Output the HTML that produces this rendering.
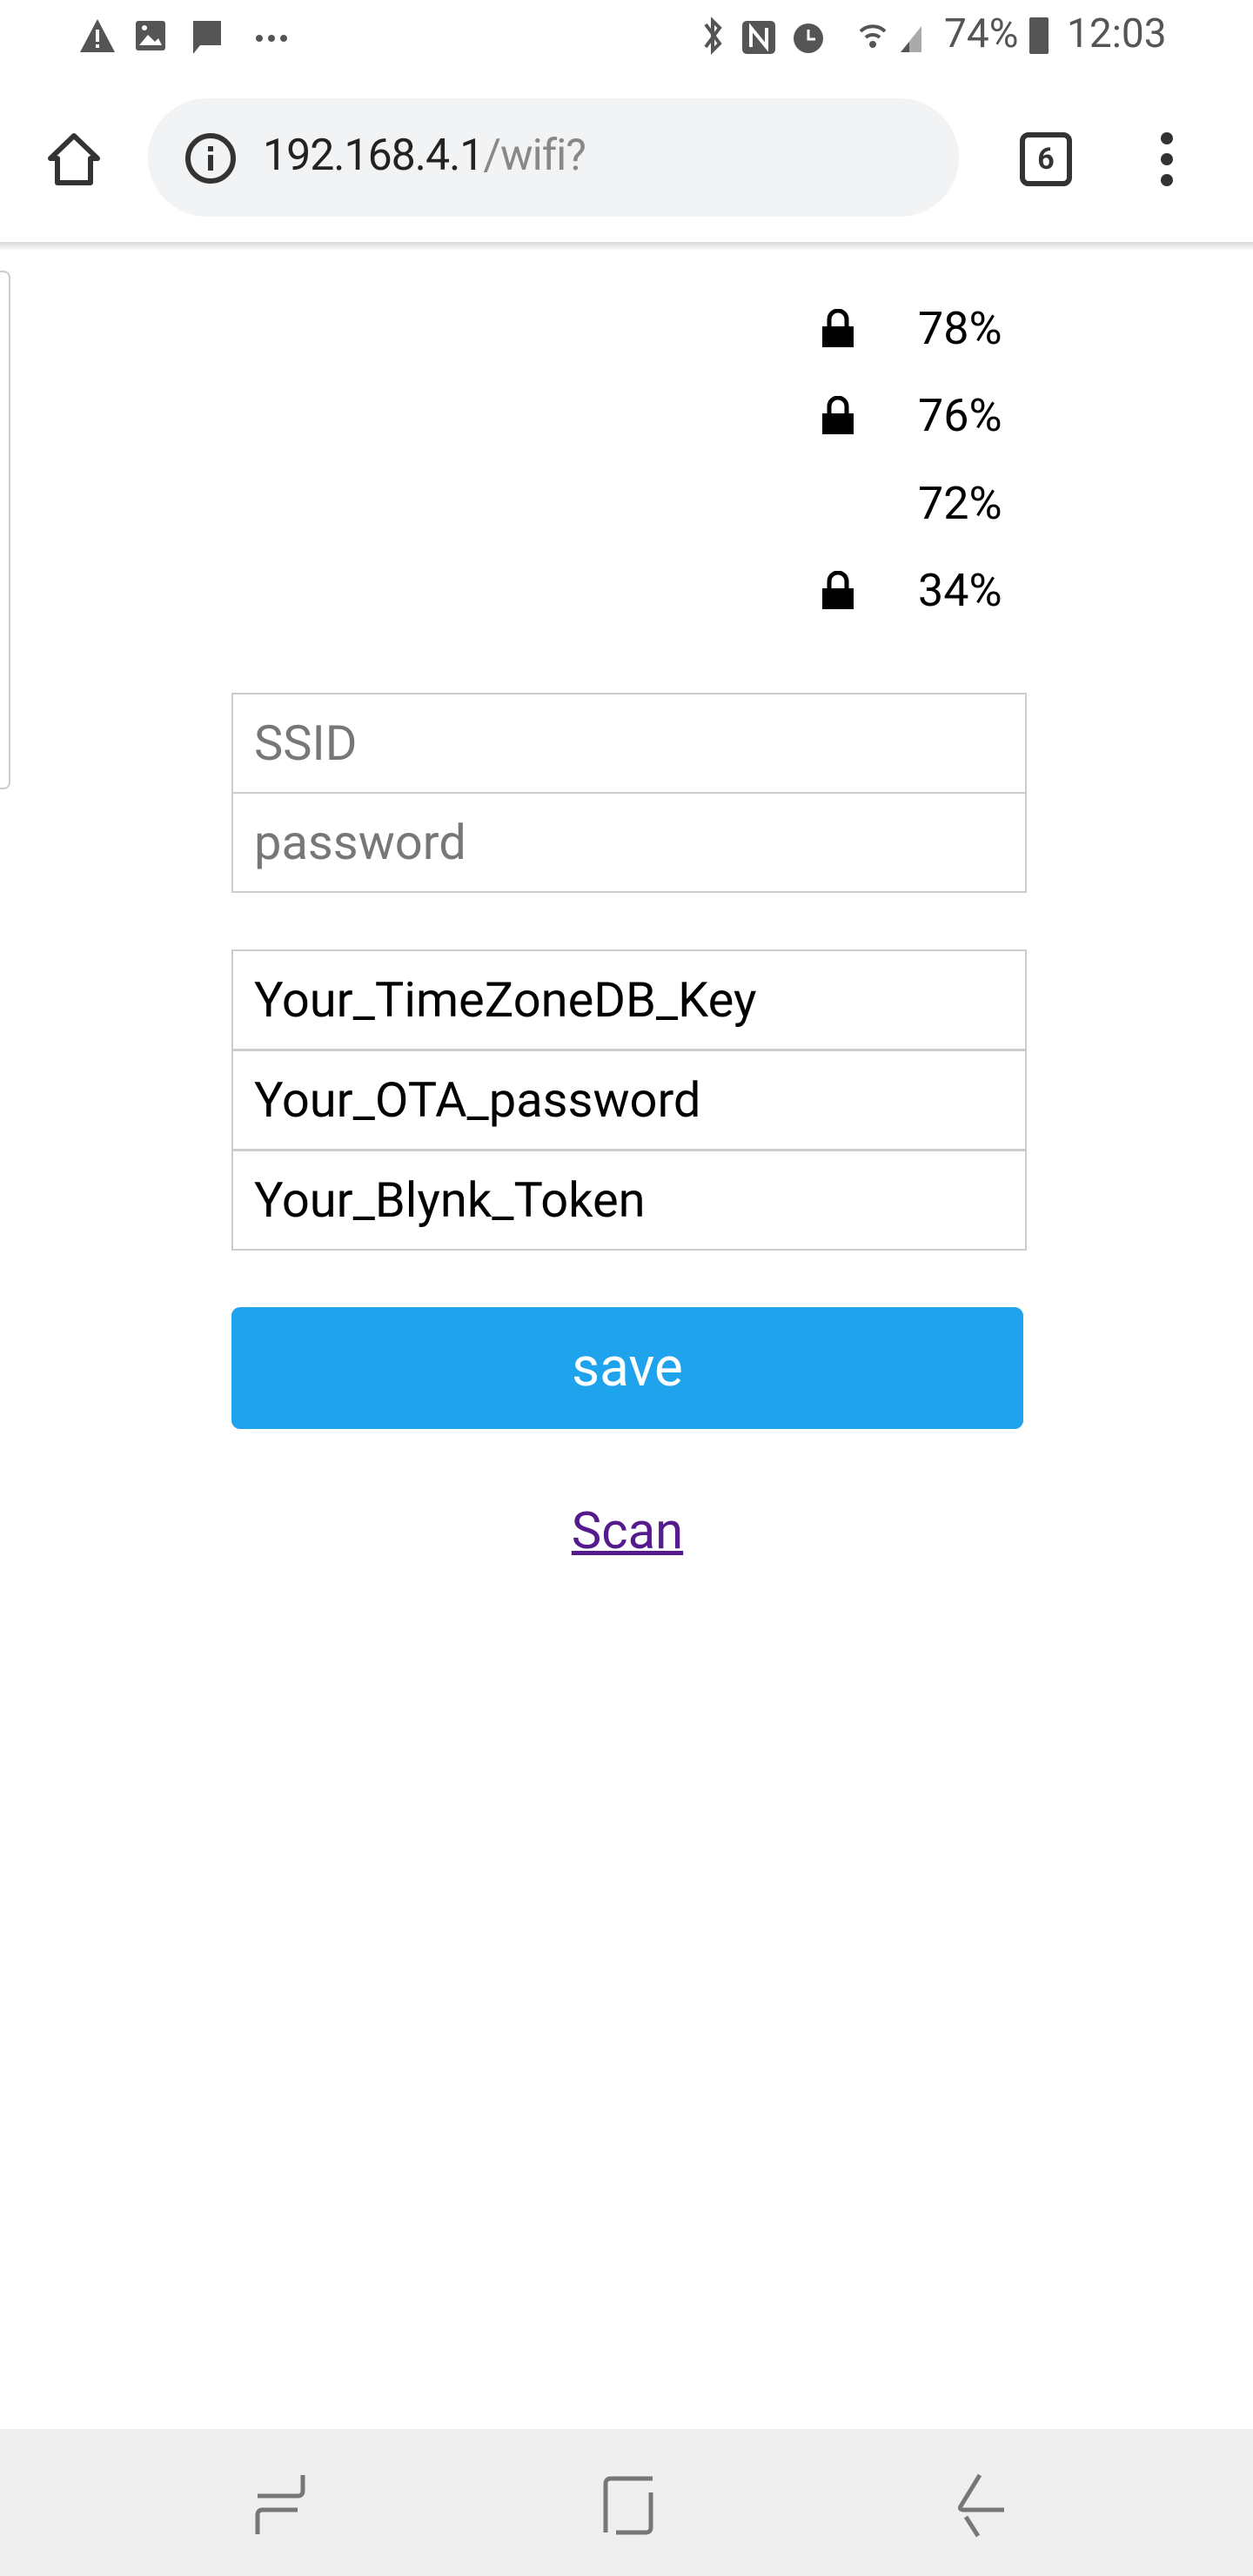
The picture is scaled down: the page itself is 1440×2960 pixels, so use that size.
<!DOCTYPE html>
<html><head><meta charset="utf-8"><style>
*{margin:0;padding:0;box-sizing:border-box}
body{width:1440px;height:2960px;background:#fff;font-family:"Roboto","Liberation Sans",sans-serif;position:relative;overflow:hidden}
.abs{position:absolute}
.sb{color:#555;font-size:46px;top:12px}
.pill{left:170px;top:113px;width:932px;height:136px;background:#f1f3f4;border-radius:68px}
.url{left:302px;top:150px;font-size:50px;color:#222;letter-spacing:-1px}
.url span{color:#888}
.pct{left:1055px;font-size:52px;color:#000}
.lock{left:943px;width:40px;height:44px}
.inp{left:266px;width:914px;height:116px;border:2px solid #ccc;font-size:56px;padding-left:24px;line-height:112px}
.ph{color:#777}
.btn{left:266px;top:1502px;width:910px;height:140px;background:#1fa3ec;border-radius:10px;color:#fff;font-size:62px;text-align:center;line-height:140px}
.scan{left:0;width:1442px;top:1726px;text-align:center;font-size:58px;color:#551a8b;text-decoration:underline}
.nav{left:0;top:2791px;width:1440px;height:169px;background:#efefef}
</style></head><body>
<svg class="abs" style="left:90px;top:20px" width="270" height="44" viewBox="0 0 270 44">
<path d="M22 2 L42 40 L2 40 Z" fill="#555"/><rect x="20" y="14" width="4" height="14" fill="#fff"/><rect x="20" y="31" width="4" height="4" fill="#fff"/>
<rect x="66" y="4" width="34" height="34" rx="3" fill="#555"/><path d="M70 32 L80 20 L88 28 L92 24 L96 32Z" fill="#fff"/><circle cx="76" cy="12" r="3" fill="#fff"/>
<path d="M132 4 H164 V32 H140 L132 42 Z" fill="#555"/>
<circle cx="208" cy="24" r="4" fill="#555"/><circle cx="222" cy="24" r="4" fill="#555"/><circle cx="236" cy="24" r="4" fill="#555"/>
</svg>
<svg class="abs" style="left:805px;top:18px" width="260" height="48" viewBox="0 0 260 48">
<path d="M6 10 L22 32 L14 40 V6 L22 14 L6 36" stroke="#555" stroke-width="4" fill="none"/>
<rect x="48" y="6" width="38" height="38" rx="5" fill="#555"/><path d="M58 36 V14 L76 36 V14" stroke="#fff" stroke-width="4" fill="none"/>
<circle cx="124" cy="26" r="17" fill="#555"/><path d="M124 16 V27 H132" stroke="#fff" stroke-width="3" fill="none"/>
<path d="M184 18 A20 20 0 0 1 212 18 M190 25 A12 12 0 0 1 206 25" stroke="#555" stroke-width="4" fill="none"/><circle cx="198" cy="33" r="4" fill="#555"/>
<path d="M230 42 L254 12 V42 Z" fill="#aaa"/><path d="M230 42 L240 30 V42Z" fill="#555"/>
</svg>
<div class="abs sb" style="left:1085px">74%</div>
<div class="abs" style="left:1183px;top:20px;width:22px;height:42px;background:#555;border-radius:2px"></div>
<div class="abs sb" style="left:1226px">12:03</div>
<svg class="abs" style="left:50px;top:148px" width="70" height="70" viewBox="0 0 70 70">
<path d="M35 8 L62 34 H54 V62 H16 V34 H8 Z" stroke="#333" stroke-width="6" fill="none" stroke-linejoin="round"/></svg>
<div class="abs pill"></div>
<svg class="abs" style="left:212px;top:152px" width="60" height="60" viewBox="0 0 60 60">
<circle cx="30" cy="30" r="26" stroke="#333" stroke-width="6" fill="none"/><rect x="27" y="26" width="6" height="18" fill="#333"/><rect x="27" y="16" width="6" height="6" fill="#333"/></svg>
<div class="abs url">192.168.4.1<span>/wifi?</span></div>
<div class="abs" style="left:1172px;top:152px;width:60px;height:62px;border:6px solid #333;border-radius:10px;font-size:34px;font-weight:bold;text-align:center;line-height:50px;color:#333">6</div>
<div class="abs" style="left:1334px;top:152px;width:14px;height:14px;border-radius:50%;background:#333"></div>
<div class="abs" style="left:1334px;top:176px;width:14px;height:14px;border-radius:50%;background:#333"></div>
<div class="abs" style="left:1334px;top:200px;width:14px;height:14px;border-radius:50%;background:#333"></div>
<div class="abs" style="left:0;top:278px;width:1440px;height:10px;background:linear-gradient(#d8d8d8,#fff)"></div>
<div class="abs" style="left:-10px;top:311px;width:22px;height:596px;border:2px solid #ccc;border-radius:8px"></div>
<svg class="abs lock" style="top:355px" viewBox="0 0 40 44"><path d="M10 22 V12 A10 10 0 0 1 30 12 V22" stroke="#000" stroke-width="5" fill="none"/><rect x="2" y="20" width="36" height="24" fill="#000"/></svg>
<div class="abs pct" style="top:347px">78%</div>
<svg class="abs lock" style="top:455px" viewBox="0 0 40 44"><path d="M10 22 V12 A10 10 0 0 1 30 12 V22" stroke="#000" stroke-width="5" fill="none"/><rect x="2" y="20" width="36" height="24" fill="#000"/></svg>
<div class="abs pct" style="top:447px">76%</div>
<div class="abs pct" style="top:548px">72%</div>
<svg class="abs lock" style="top:656px" viewBox="0 0 40 44"><path d="M10 22 V12 A10 10 0 0 1 30 12 V22" stroke="#000" stroke-width="5" fill="none"/><rect x="2" y="20" width="36" height="24" fill="#000"/></svg>
<div class="abs pct" style="top:648px">34%</div>
<div class="abs inp ph" style="top:796px">SSID</div>
<div class="abs inp ph" style="top:910px">password</div>
<div class="abs inp" style="top:1091px">Your_TimeZoneDB_Key</div>
<div class="abs inp" style="top:1206px">Your_OTA_password</div>
<div class="abs inp" style="top:1321px">Your_Blynk_Token</div>
<div class="abs btn">save</div>
<div class="abs scan">Scan</div>
<div class="abs nav"></div>
<svg class="abs" style="left:290px;top:2840px" width="70" height="76" viewBox="0 0 70 76">
<path d="M58 4 V22 Q58 28 52 28 H6 M52 44 H12 Q6 44 6 50 V72" stroke="#777" stroke-width="5" fill="none"/></svg>
<svg class="abs" style="left:692px;top:2844px" width="62" height="70" viewBox="0 0 62 70">
<path d="M58 4 H10 Q4 4 4 10 V66 M56 20 V60 Q56 66 50 66 H16" stroke="#777" stroke-width="5" fill="none"/></svg>
<svg class="abs" style="left:1096px;top:2840px" width="62" height="76" viewBox="0 0 62 76">
<path d="M30 4 L8 40 Q6 44 12 44 H58 M14 52 L28 74" stroke="#777" stroke-width="5" fill="none"/></svg>
</body></html>
